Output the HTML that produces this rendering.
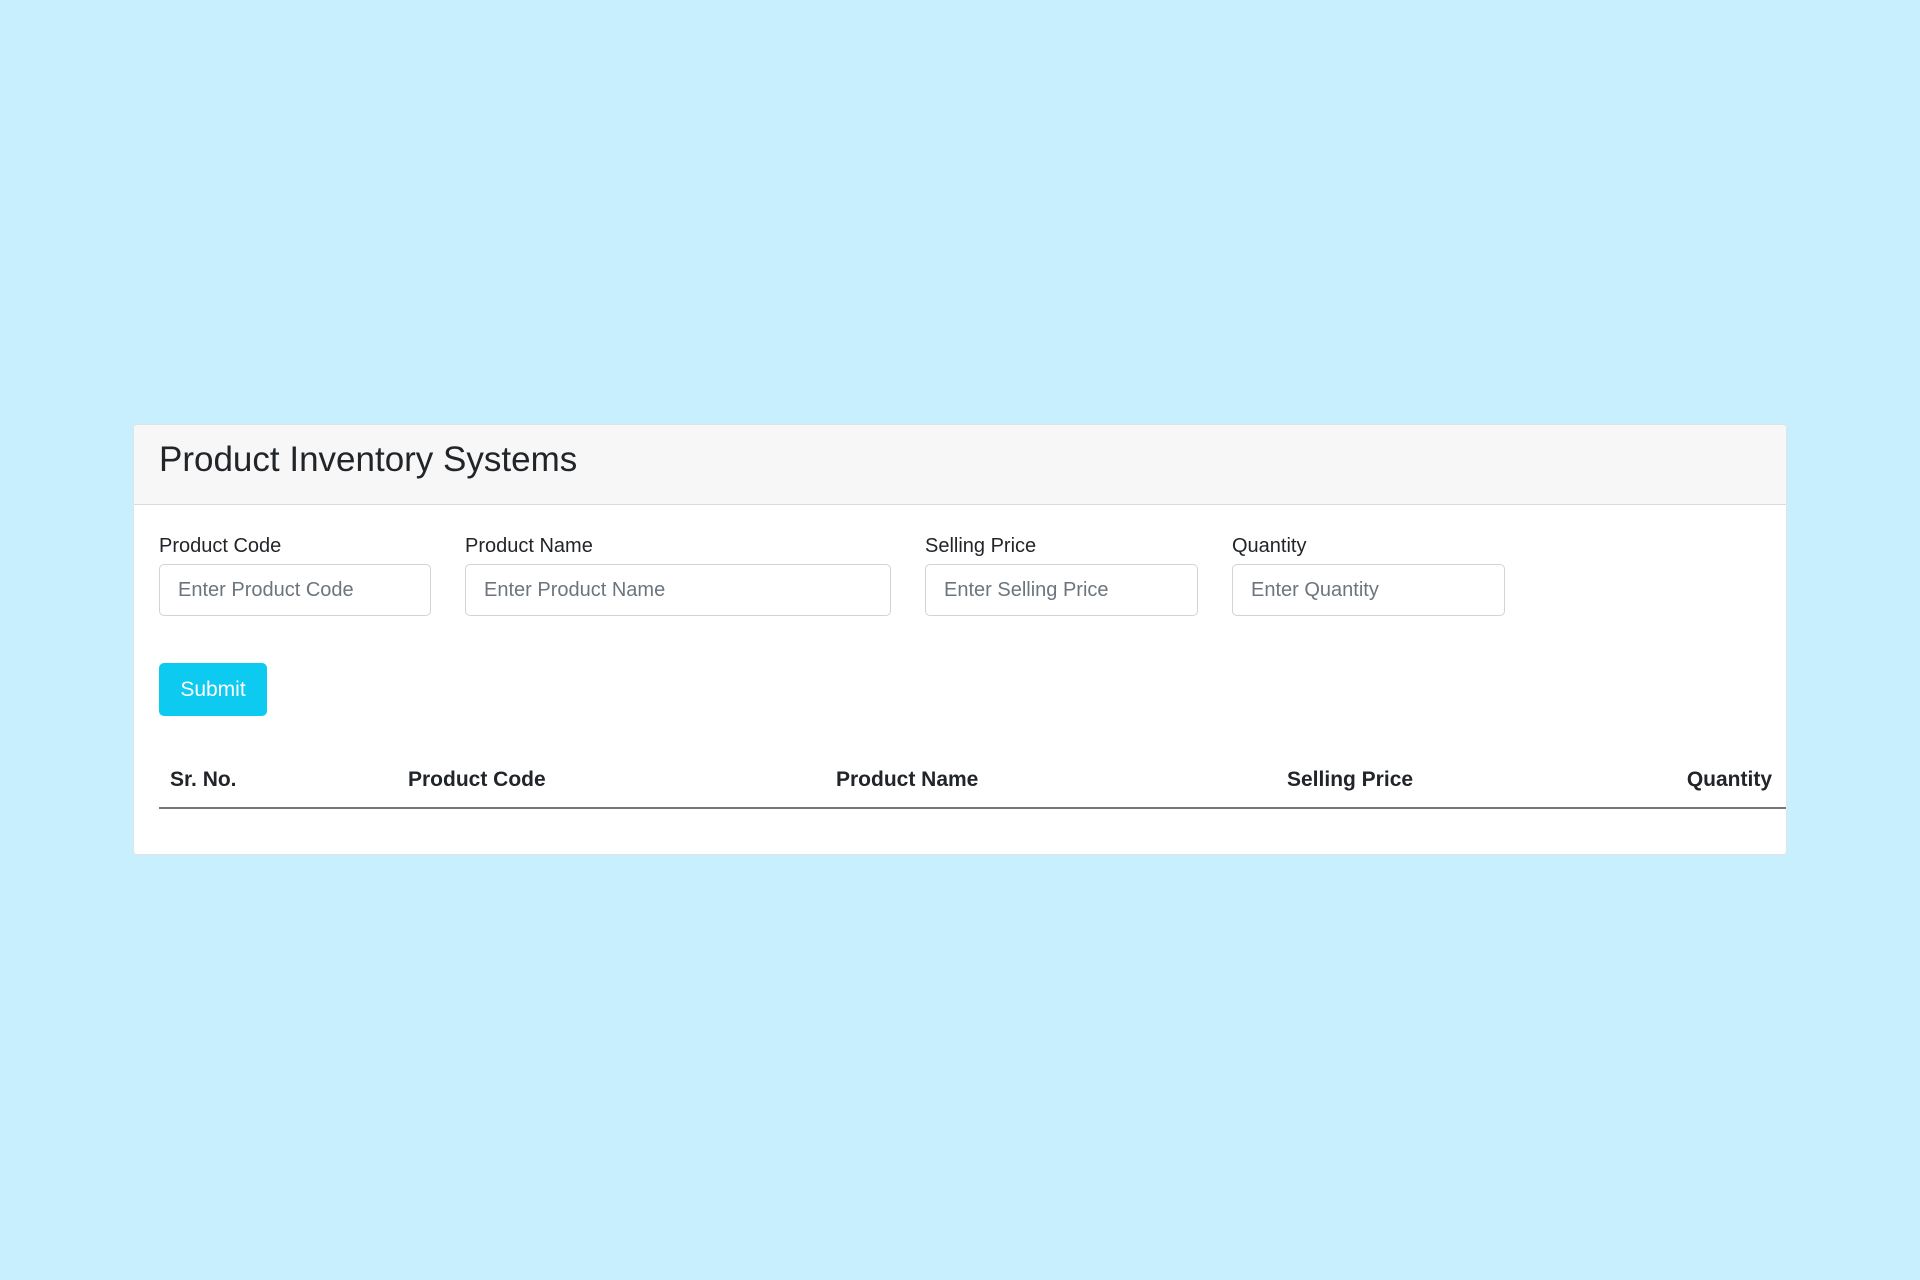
<!DOCTYPE html>
<html><head><meta charset="utf-8"><style>
body{margin:0;width:1920px;height:1280px;background:#c7effd;font-family:"Liberation Sans",sans-serif;color:#212529;position:relative;overflow:hidden}
.card{position:absolute;left:133px;top:424px;width:1654px;height:431px;background:#fff;border:1px solid #e3e3e3;border-radius:4px;box-sizing:border-box;overflow:hidden}
.hdr{position:absolute;left:0;top:0;right:0;height:79px;background:#f7f7f7;border-bottom:1px solid #dcdcdc}
.t{position:absolute;white-space:nowrap}
h3{position:absolute;left:25px;top:15px;margin:0;font-size:35px;font-weight:normal;line-height:40px;color:#212529}
.lbl{font-size:20px;line-height:24px;top:109px}
.inp{position:absolute;top:139px;height:52px;border:1px solid #ced4da;border-radius:5px;box-sizing:border-box;font-size:20px;color:#6c757d;padding-left:18px;line-height:50px}
.btn{position:absolute;left:25px;top:238px;width:108px;height:53px;background:#0dcaf0;border-radius:5px;color:#fff;font-size:21px;line-height:53px;text-align:center}
.th{font-weight:bold;font-size:21px;top:343px;line-height:24px}
.line{position:absolute;left:25px;right:0;top:382px;height:2px;background:#777}
</style></head><body>
<div class="card">
<div class="hdr"><h3>Product Inventory Systems</h3></div>
<div class="t lbl" style="left:25px">Product Code</div>
<div class="t lbl" style="left:331px">Product Name</div>
<div class="t lbl" style="left:791px">Selling Price</div>
<div class="t lbl" style="left:1098px">Quantity</div>
<div class="inp" style="left:25px;width:272px">Enter Product Code</div>
<div class="inp" style="left:331px;width:426px">Enter Product Name</div>
<div class="inp" style="left:791px;width:273px">Enter Selling Price</div>
<div class="inp" style="left:1098px;width:273px">Enter Quantity</div>
<div class="btn">Submit</div>
<div class="t th" style="left:36px">Sr. No.</div>
<div class="t th" style="left:274px">Product Code</div>
<div class="t th" style="left:702px">Product Name</div>
<div class="t th" style="left:1153px">Selling Price</div>
<div class="t th" style="right:14px">Quantity</div>
<div class="line"></div>
</div>
</body></html>
